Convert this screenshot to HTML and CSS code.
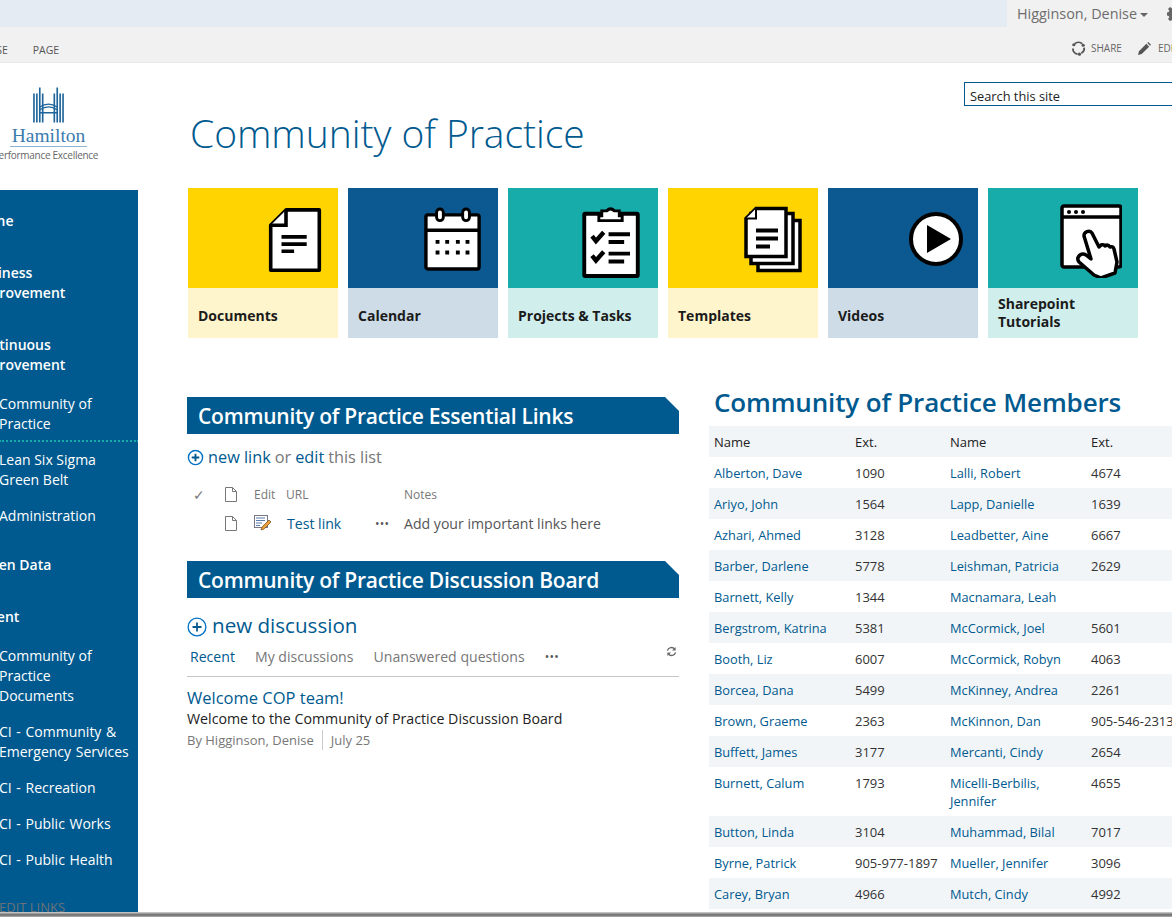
FILE: index.html
```html
<!DOCTYPE html>
<html lang="en">
<head>
<meta charset="utf-8">
<title>Community of Practice</title>
<link rel="stylesheet" href="styles.css">
</head>
<body>
<div class="suitebar">
  <div class="suite-fill"></div>
  <div class="suite-user">
    <span class="user-name">Higginson, Denise</span><span class="caret"></span>
    <svg class="gear" viewBox="0 0 16 16"><path fill="#666" d="M6.5 0h3l.4 2.2 1.3.6L13 1.5l2 2-1.300 1.800.6 1.300 2.200.4v3l-2.200.4-.6 1.300 1.300 1.800-2 2-1.800-1.300-1.300.6-.4 2.200h-3l-.4-2.200-1.300-.6L3 15l-2-2 1.300-1.800-.6-1.300L-.5 9.500v-3l2.200-.4.6-1.300L1 3l2-2 1.800 1.300 1.300-.6z"/><circle cx="8" cy="8" r="2.500" fill="#f1f1f1"/></svg>
  </div>
</div>
<div class="ribbon">
  <div class="ribbon-tabs"><span class="tab-cut">BROWSE</span><span class="tab">PAGE</span></div>
  <div class="ribbon-actions">
    <svg class="share-icon" viewBox="0 0 16 16"><path fill="none" stroke="#555" stroke-width="2" d="M4 3a6 6 0 0 1 8 0M14 7a6 6 0 0 1-3 6M7 14a6 6 0 0 1-5-6"/><circle cx="3" cy="4" r="1.700" fill="#555"/><circle cx="13" cy="4.500" r="1.700" fill="#555"/><circle cx="9" cy="14" r="1.700" fill="#555"/></svg>
    <span class="action">SHARE</span>
    <svg class="pencil-icon" viewBox="0 0 14 14"><path fill="#555" d="M0 14l1-4 8-8 3 3-8 8zM10 1l1-1 3 3-1 1z"/></svg>
    <span class="action">EDIT</span>
  </div>
</div>
<div class="page">
  <aside class="side">
    <div class="logo">
      <svg class="logo-mark" viewBox="0 0 32 36"><g fill="none" stroke="#1f659b" stroke-width="1.700"><path d="M1 6v30M4 6v30M7 0v36M10 6v30M22 6v30M25 0v36M28 6v30M31 6v30"/><path d="M7 20q9-6 18 0M7 23q9-6 18 0M7 26h18" stroke-width="1.300"/></g></svg>
      <div class="logo-name">Hamilton</div>
      <div class="logo-sub">Performance Excellence</div>
    </div>
    <nav class="nav">
      <a class="nav-top n-home">Home</a>
      <a class="nav-top n-biz">Business Improvement</a>
      <a class="nav-top n-cont">Continuous Improvement</a>
      <a class="nav-sub n-cop">Community of Practice</a>
      <a class="nav-sub n-lean">Lean Six Sigma Green Belt</a>
      <a class="nav-sub n-admin">Administration</a>
      <a class="nav-top n-open">Open Data</a>
      <a class="nav-top n-cont2">Content</a>
      <a class="nav-sub n-docs">Community of Practice Documents</a>
      <a class="nav-sub n-ci">CI - Community &amp; Emergency Services</a>
      <a class="nav-sub n-ci2">CI - Recreation</a>
      <a class="nav-sub n-ci2">CI - Public Works</a>
      <a class="nav-sub n-ci2">CI - Public Health</a>
      <a class="nav-edit">EDIT LINKS</a>
    </nav>
  </aside>
  <main class="content">
    <div class="head">
      <h1 class="title">Community of Practice</h1>
      <div class="search">Search this site</div>
    </div>
    <div class="tiles">
      <a class="tile t-yellow">
        <div class="tile-top">
          <svg class="ico" viewBox="0 0 60 72"><path d="M20 2h37v67H3V19z" fill="#fff" stroke="#000" stroke-width="4" stroke-linejoin="round"/><path d="M3 19h17V2" fill="#fff" stroke="#000" stroke-width="4"/><path d="M15 32h28M15 40h28M15 48h14" stroke="#000" stroke-width="4"/></svg>
        </div>
        <div class="tile-label">Documents</div>
      </a>
      <a class="tile t-blue">
        <div class="tile-top">
          <svg class="ico ico-cal" viewBox="0 0 60 66"><rect x="2" y="8" width="55" height="56" rx="2" fill="#fff" stroke="#000" stroke-width="3.500"/><path d="M2 24h55" stroke="#000" stroke-width="3.500"/><rect x="13" y="2" width="7" height="12" rx="3.500" fill="#fff" stroke="#000" stroke-width="3"/><rect x="40" y="2" width="7" height="12" rx="3.500" fill="#fff" stroke="#000" stroke-width="3"/><path d="M12 36h4M22 36h4M33 36h4M43 36h4M12 47h4M22 47h4M33 47h4M43 47h4" stroke="#000" stroke-width="4"/></svg>
        </div>
        <div class="tile-label">Calendar</div>
      </a>
      <a class="tile t-teal">
        <div class="tile-top">
          <svg class="ico ico-clip" viewBox="0 0 60 74"><rect x="2" y="8" width="55" height="64" rx="1" fill="#fff" stroke="#000" stroke-width="4"/><path d="M20 10V5h5q4-4 8 0h5v5h3v5H17v-5z" fill="#fff" stroke="#000" stroke-width="3"/><path d="M10 31l4 5 8-9M10 51l4 5 8-9" fill="none" stroke="#000" stroke-width="4.500"/><path d="M27 29h22M27 37h16M27 49h22M27 57h16" stroke="#000" stroke-width="4"/></svg>
        </div>
        <div class="tile-label">Projects &amp; Tasks</div>
      </a>
      <a class="tile t-yellow">
        <div class="tile-top">
          <svg class="ico ico-tpl" viewBox="0 0 58 66"><rect x="14" y="14" width="42" height="50" fill="#fff" stroke="#000" stroke-width="3.500"/><rect x="7" y="7" width="42" height="50" fill="#fff" stroke="#000" stroke-width="3.500"/><path d="M12 2h30v48H2V12z" fill="#fff" stroke="#000" stroke-width="3.500"/><path d="M2 12h10V2" fill="#fff" stroke="#000" stroke-width="2"/><path d="M12 24h22M12 32h22M12 40h14" stroke="#000" stroke-width="4"/></svg>
        </div>
        <div class="tile-label">Templates</div>
      </a>
      <a class="tile t-blue">
        <div class="tile-top">
          <svg class="ico ico-play" viewBox="0 0 54 54"><circle cx="27" cy="27" r="25" fill="#fff" stroke="#000" stroke-width="4"/><path d="M18 13l24 14-24 14z" fill="#000"/></svg>
        </div>
        <div class="tile-label">Videos</div>
      </a>
      <a class="tile t-teal">
        <div class="tile-top">
          <svg class="ico ico-hand" viewBox="0 0 62 74"><rect x="2" y="2" width="59" height="61" rx="2" fill="#fff" stroke="#000" stroke-width="3.500"/><path d="M2 13h59" stroke="#000" stroke-width="3.500"/><circle cx="9" cy="8" r="2" fill="#000"/><circle cx="16" cy="8" r="2" fill="#000"/><circle cx="23" cy="8" r="2" fill="#000"/><path d="M24 32a4.500 4.500 0 0 1 8-3l7 14 2-2q3-1 4 1 3-2 5 1 3-1 4 2l3 13-2 11-14 5-7-3-15-13q-3-4 1-7 3-2 6 0l5 4z" fill="#fff" stroke="#000" stroke-width="3.500" stroke-linejoin="round"/></svg>
        </div>
        <div class="tile-label two">Sharepoint Tutorials</div>
      </a>
    </div>
    <div class="columns">
      <div class="left">
        <h2 class="band band-first">Community of Practice Essential Links</h2>
        <div class="newline">
          <svg class="plus" viewBox="0 0 18 18"><circle cx="9" cy="9" r="7.500" fill="none" stroke="#0072c6" stroke-width="1.500"/><path d="M9 5v8M5 9h8" stroke="#005a8f" stroke-width="2"/></svg>
          <span class="lnk">new link</span> <span class="gray">or</span> <span class="lnk">edit</span> <span class="gray">this list</span>
        </div>
        <div class="lgrid lhead">
          <span class="check">✓</span>
          <svg class="doc" viewBox="0 0 12 15"><path d="M.5.500h7l4 4v10H.500zM7.500.500v4h4" fill="#fff" stroke="#777"/></svg>
          <span class="c-edit">Edit</span><span class="c-url">URL</span><span></span><span>Notes</span>
        </div>
        <div class="lgrid lrow">
          <span></span>
          <svg class="doc" viewBox="0 0 12 15"><path d="M.5.500h7l4 4v10H.500zM7.500.500v4h4" fill="#fff" stroke="#777"/></svg>
          <svg class="editico" viewBox="0 0 17 16"><rect x=".5" y=".5" width="13" height="12" fill="#fff" stroke="#778"/><path d="M2 3h9M2 5.500h9M2 8h6M2 10.500h4" stroke="#5b7ba8"/><path d="M15 5l2 2-7 7-3 1 1-3z" fill="#e9a03b" stroke="#7a4a12" stroke-width=".7"/></svg>
          <span class="test lnk">Test link</span>
          <span class="dots">•••</span>
          <span class="note">Add your important links here</span>
        </div>
        <h2 class="band band-second">Community of Practice Discussion Board</h2>
        <div class="newdisc">
          <svg class="plus plus-big" viewBox="0 0 18 18"><circle cx="9" cy="9" r="8" fill="none" stroke="#0072c6" stroke-width="1.200"/><path d="M9 5v8M5 9h8" stroke="#005a8f" stroke-width="1.600"/></svg>
          <span>new discussion</span>
        </div>
        <div class="disc-tabs">
          <span class="dt dt-on">Recent</span><span class="dt">My discussions</span><span class="dt">Unanswered questions</span><span class="dots dt-dots">•••</span>
          <svg class="refresh" viewBox="0 0 12 12"><path fill="none" stroke="#666" stroke-width="1.500" d="M1.500 5a4.500 4.500 0 0 1 8-1.500M10.500 7a4.500 4.500 0 0 1-8 1.500"/><path fill="#666" d="M10.500 1v4h-4zM1.500 11V7h4z"/></svg>
        </div>
        <div class="post">
          <div class="post-title">Welcome COP team!</div>
          <div class="post-body">Welcome to the Community of Practice Discussion Board</div>
          <div class="post-meta"><span class="by">By Higginson, Denise</span><span>July 25</span></div>
        </div>
      </div>
      <div class="right">
        <h2 class="members">Community of Practice Members</h2>
        <table class="tbl">
          <colgroup><col class="c1"><col class="c2"><col class="c3"><col class="c4"></colgroup>
          <tr class="th"><td>Name</td><td>Ext.</td><td>Name</td><td>Ext.</td></tr>
          <tr><td><a>Alberton, Dave</a></td><td>1090</td><td><a>Lalli, Robert</a></td><td>4674</td></tr>
          <tr class="alt"><td><a>Ariyo, John</a></td><td>1564</td><td><a>Lapp, Danielle</a></td><td>1639</td></tr>
          <tr><td><a>Azhari, Ahmed</a></td><td>3128</td><td><a>Leadbetter, Aine</a></td><td>6667</td></tr>
          <tr class="alt"><td><a>Barber, Darlene</a></td><td>5778</td><td><a>Leishman, Patricia</a></td><td>2629</td></tr>
          <tr><td><a>Barnett, Kelly</a></td><td>1344</td><td><a>Macnamara, Leah</a></td><td></td></tr>
          <tr class="alt"><td><a>Bergstrom, Katrina</a></td><td>5381</td><td><a>McCormick, Joel</a></td><td>5601</td></tr>
          <tr><td><a>Booth, Liz</a></td><td>6007</td><td><a>McCormick, Robyn</a></td><td>4063</td></tr>
          <tr class="alt"><td><a>Borcea, Dana</a></td><td>5499</td><td><a>McKinney, Andrea</a></td><td>2261</td></tr>
          <tr><td><a>Brown, Graeme</a></td><td>2363</td><td><a>McKinnon, Dan</a></td><td>905-546-2313</td></tr>
          <tr class="alt"><td><a>Buffett, James</a></td><td>3177</td><td><a>Mercanti, Cindy</a></td><td>2654</td></tr>
          <tr><td><a>Burnett, Calum</a></td><td>1793</td><td><a>Micelli-Berbilis, Jennifer</a></td><td>4655</td></tr>
          <tr class="alt"><td><a>Button, Linda</a></td><td>3104</td><td><a>Muhammad, Bilal</a></td><td>7017</td></tr>
          <tr><td><a>Byrne, Patrick</a></td><td>905-977-1897</td><td><a>Mueller, Jennifer</a></td><td>3096</td></tr>
          <tr class="alt"><td><a>Carey, Bryan</a></td><td>4966</td><td><a>Mutch, Cindy</a></td><td>4992</td></tr>
        </table>
      </div>
    </div>
  </main>
</div>
<div class="winedge"></div>
</body>
</html>
```
FILE: styles.css
```css
* { box-sizing: border-box; }
html, body { margin: 0; padding: 0; height: 917px; overflow: hidden; }
body { width: 1172px; background: #fff; font-family: "Open Sans", "Noto Sans", sans-serif; color: #444; position: relative; font-size: 13px; }
svg { display: block; flex: none; }
h1, h2 { margin: 0; font-weight: 600; }

.suitebar { height: 27px; display: flex; background: #f1f1f1; }
.suite-fill { width: 1007px; flex: none; background: #e4ebf3; }
.suite-user { flex: 1; display: flex; align-items: center; padding-left: 10px; color: #6d6d6d; font-size: 14.400px; white-space: nowrap; height: 27px; overflow: hidden; }
.caret { width: 0; height: 0; margin: 2px 0 0 3px; border: 4px solid transparent; border-top-color: #666; border-bottom: 0; flex: none; }
.gear { width: 16px; height: 16px; margin-left: 19px; }

.ribbon { height: 36px; background: #f1f1f1; border-bottom: 1px solid #e8e8e8; display: flex; justify-content: space-between; align-items: center; overflow: hidden; }
.ribbon-tabs { display: flex; align-items: center; font-size: 10.500px; color: #555; margin-left: -35px; padding-top: 10px; }
.tab { margin-left: 25px; }
.ribbon-actions { display: flex; align-items: center; font-size: 10px; color: #666; margin-right: -7px; padding-top: 7px; }
.share-icon { width: 15px; height: 15px; margin-right: 5px; }
.pencil-icon { width: 13px; height: 13px; margin: 0 7px 0 16px; }

.page { display: flex; height: 849px; }
.side { width: 138px; flex: none; display: flex; flex-direction: column; overflow: hidden; }
.logo { height: 127px; position: relative; display: flex; flex-direction: column; align-items: center; padding-top: 24px; width: 97px; }
.logo-mark { width: 31px; height: 36px; }
.logo-name { font-family: "Liberation Serif", serif; font-size: 19.500px; line-height: 20px; color: #3b7cae; border-bottom: 1px solid #8fb4d2; margin-top: 3px; padding: 0 2px; }
.logo-sub { font-size: 10px; color: #666; white-space: nowrap; line-height: 12px; margin-top: 2px; margin-left: -6px; letter-spacing: -.28px; }

.nav { flex: 1; min-height: 0; background: #005a8f; color: #fff; display: flex; flex-direction: column; font-size: 14px; line-height: 20px; position: relative; overflow: hidden; }
.nav a { display: block; flex: none; }
.nav-top { font-weight: 600; margin-left: -27px; width: 125px; }
.nav-sub { width: 138px; padding-right: 4px; margin-left: -1px; }
.n-home { margin-top: 21px; }
.n-biz { margin-top: 32px; }
.n-cont { margin-top: 32px; width: 105px; }
.n-cop { margin-top: 19px; padding-bottom: 6px; border-bottom: 2px dotted #16aaaa; width: 140px; }
.n-lean { margin-top: 8px; width: 120px; }
.n-admin { margin-top: 16px; }
.n-open { margin-top: 29px; margin-left: -21px; }
.n-cont2 { margin-top: 32px; margin-left: -35px; }
.n-docs { margin-top: 19px; width: 120px; }
.n-ci { margin-top: 16px; word-spacing: 1px; }
.n-ci2 { margin-top: 16px; word-spacing: 1px; }
.nav-edit { position: absolute; left: -1px; bottom: -5px; color: #6d7278; font-size: 13px; }

.content { flex: 1; min-width: 0; padding-left: 49px; }
.head { height: 125px; display: flex; position: relative; }
.title { font-weight: 300; font-size: 39px; line-height: 50px; color: #005a8f; margin: 45px 0 0 3px; letter-spacing: -.05px; white-space: nowrap; }
.search { position: absolute; right: -1px; top: 19px; width: 209px; height: 24px; border: 1px solid #005a8f; font-size: 12.800px; color: #222; padding: 4px 0 0 5px; line-height: 19px; }

.tiles { display: flex; gap: 10px; padding-left: 1px; }
.tile { width: 150px; height: 150px; display: flex; flex-direction: column; color: #1b1b1b; font-weight: 700; font-size: 14px; line-height: 18px; }
.tile-top { height: 100px; position: relative; }
.tile-label { height: 50px; display: flex; align-items: center; padding: 5px 10px 0; }
.tile-label.two { padding-top: 0; }
.t-yellow .tile-top { background: #ffd400; } .t-yellow .tile-label { background: #fff5cc; }
.t-blue .tile-top { background: #0c5890; } .t-blue .tile-label { background: #cddce6; }
.t-teal .tile-top { background: #17abaa; } .t-teal .tile-label { background: #d0eeec; }
.ico { position: absolute; left: 80px; top: 20px; width: 54px; height: 65px; }
.ico-cal { left: 76px; top: 19px; width: 58px; height: 64px; }
.ico-clip { left: 74px; top: 18px; width: 59px; height: 72px; }
.ico-tpl { left: 76px; top: 18px; width: 58px; height: 67px; }
.ico-play { left: 81px; top: 24px; width: 54px; height: 54px; }
.ico-hand { left: 72px; top: 16px; width: 62px; height: 74px; }

.columns { display: flex; padding-top: 59px; }
.left { width: 492px; flex: none; }
.right { margin-left: 30px; width: 470px; flex: none; margin-top: -13px; }

.band { height: 37px; background: #005a8f; color: #fff; font-size: 21px; line-height: 38px; padding-left: 11px; letter-spacing: -.25px; white-space: nowrap; clip-path: polygon(0 0, calc(100% - 14px) 0, 100% 14px, 100% 100%, 0 100%); }
.newline { display: flex; align-items: center; gap: 4px; font-size: 16.300px; line-height: 22px; margin-top: 12px; white-space: pre; }
.lnk { color: #005a8f; }
.gray { color: #777; }
.plus { width: 17px; height: 17px; }
.lgrid { display: grid; align-items: center; white-space: nowrap; }
.lgrid.lhead { grid-template-columns: 38px 29px 32px 118px 0 1fr; font-size: 12px; color: #777; height: 22px; margin-top: 15px; }
.check { padding-left: 6px; font-size: 14px; }
.doc { width: 12px; height: 15px; }
.lrow { grid-template-columns: 38px 29px 33px 88px 29px 1fr; font-size: 14.100px; height: 30px; margin-top: 3px; }
.editico { width: 17px; height: 16px; }
.dots { font-size: 12px; letter-spacing: .3px; color: #555; }
.note { color: #555; }
.band-second { margin-top: 23px; }
.newdisc { display: flex; align-items: center; gap: 5px; font-size: 20.600px; line-height: 28px; color: #005a8f; margin-top: 13px; }
.plus-big { width: 20px; height: 20px; margin-top: 3px; }
.disc-tabs { display: flex; align-items: center; gap: 20px; border-bottom: 1px solid #c6c6c6; height: 35px; padding: 0 0 5px 3px; font-size: 14.100px; color: #777; position: relative; margin-top: 3px; white-space: nowrap; }
.dt-on { color: #005a8f; }
.refresh { position: absolute; right: 2px; top: 4px; width: 11px; height: 11px; }
.post { padding-top: 11px; }
.post-title { font-size: 16.500px; line-height: 20px; color: #005a8f; }
.post-body { font-size: 14.200px; line-height: 22px; color: #222; }
.post-meta { font-size: 13px; line-height: 20px; color: #777; display: flex; }
.by { padding-right: 8px; margin-right: 8px; border-right: 1px solid #ccc; }

.members { font-size: 26px; line-height: 36px; color: #005a8f; font-weight: 600; white-space: nowrap; letter-spacing: -.15px; padding-left: 5px; }
.tbl { border-collapse: collapse; table-layout: fixed; width: 470px; margin-top: 6px; font-size: 13px; }
.c1 { width: 141px; } .c2 { width: 95px; } .c3 { width: 141px; } .c4 { width: 93px; }
.tbl td { padding: 7px 5px 6px; line-height: 18px; vertical-align: top; color: #333; }
.tbl td:nth-child(4) { white-space: nowrap; }
.tbl a { color: #005a8f; font-size: 12.800px; }
.th td { color: #222; }
.th, .alt { background: #f2f5f8; }
.winedge { position: absolute; left: 0; right: 0; bottom: 0; height: 5px; background: linear-gradient(#d9d9d9, #9a9a9a 30%, #6a6a6a 60%, #b5b5b5); }
```
